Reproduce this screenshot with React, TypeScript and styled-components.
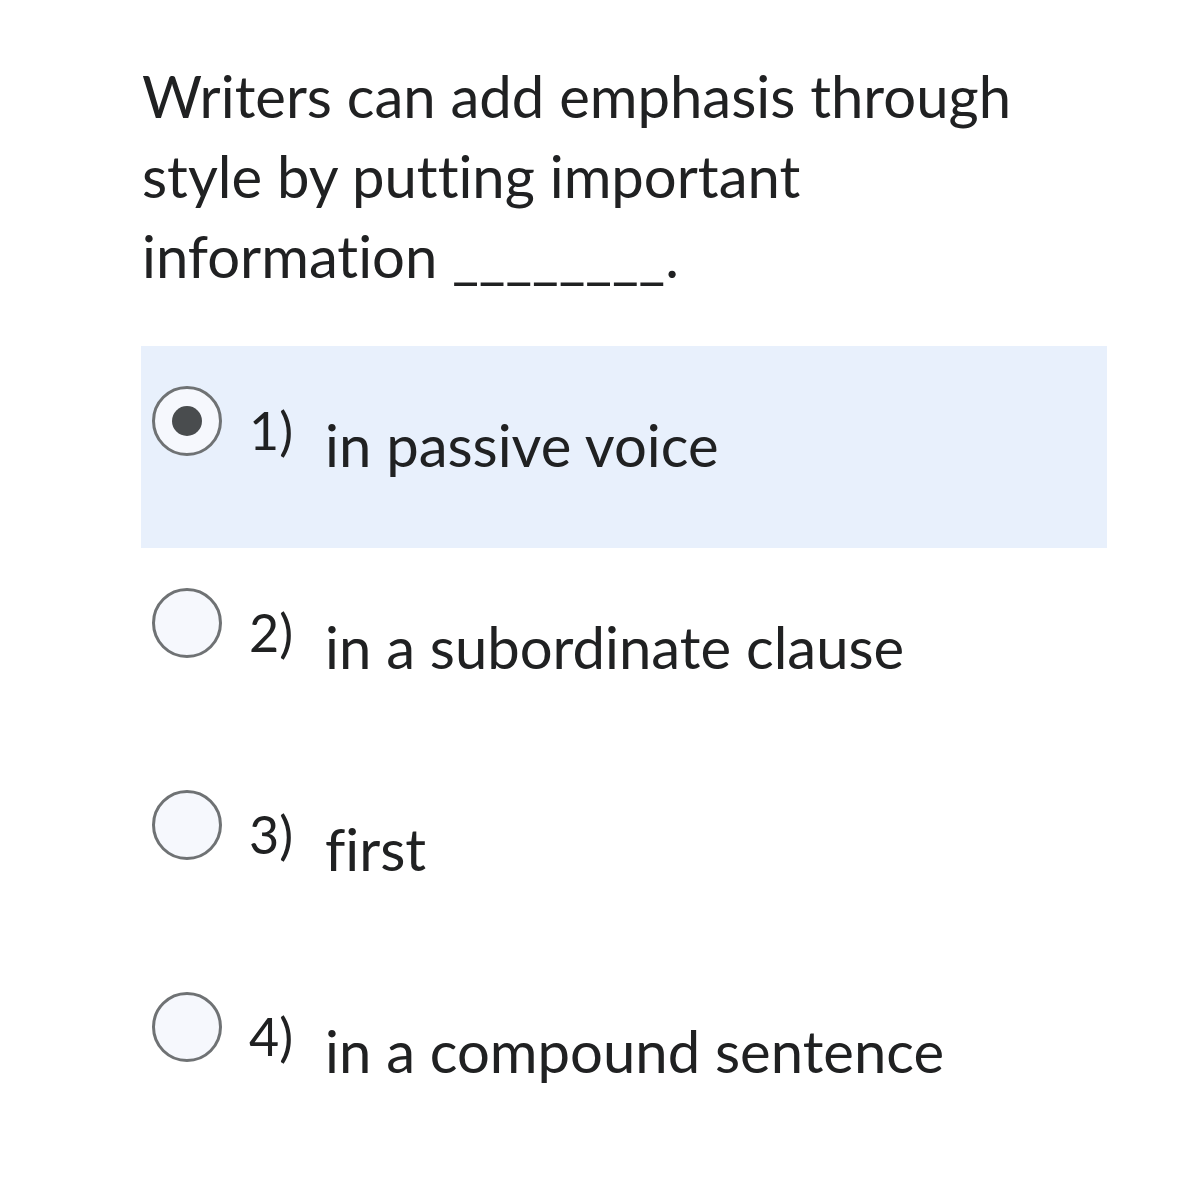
import React from "react";
import styled, { createGlobalStyle } from "styled-components";

const Global = createGlobalStyle`
  html, body { margin: 0; padding: 0; background: #ffffff; }
  body {
    font-family: Lato, "Open Sans", sans-serif;
    color: #202122;
    font-variant-ligatures: none;
    font-feature-settings: "liga" 0, "clig" 0;
  }
`;

const Page = styled.div`
  width: 1179px;
  height: 1179px;
  box-sizing: border-box;
  padding: 56px 72px 0 141px;
`;

const Question = styled.p`
  margin: 0 0 50px 1px;
  font-size: 58px;
  line-height: 80px;
  color: #202122;
  width: 900px;
`;

const Options = styled.div`
  display: flex;
  flex-direction: column;
`;

const Row = styled.label<{ $selected?: boolean }>`
  display: flex;
  align-items: flex-start;
  height: 202px;
  box-sizing: border-box;
  padding: 40px 0 0 11px;
  width: 966px;
  background: ${(p) => (p.$selected ? "#e8f0fc" : "transparent")};
`;

const Radio = styled.span<{ $checked?: boolean }>`
  flex: none;
  width: 70px;
  height: 70px;
  box-sizing: border-box;
  border-radius: 50%;
  border: 3px solid #6f7274;
  background: #f6f8fd;
  display: flex;
  align-items: center;
  justify-content: center;
  &::after {
    content: "";
    display: ${(p) => (p.$checked ? "block" : "none")};
    width: 30px;
    height: 30px;
    border-radius: 50%;
    background: #494c4e;
  }
`;

const Num = styled.span`
  margin-left: 27px;
  width: 76px;
  flex: none;
  font-size: 52px;
  line-height: 56px;
  margin-top: 16px;
  color: #202122;
`;

const Text = styled.span`
  font-size: 58px;
  line-height: 64px;
  margin-top: 27px;
  color: #202122;
`;

const options = [
  "in passive voice",
  "in a subordinate clause",
  "first",
  "in a compound sentence",
];

export default function App() {
  return (
    <>
      <Global />
      <Page>
        <Question>
          Writers can add emphasis through style by putting important information ________.
        </Question>
        <Options>
          {options.map((o, i) => (
            <Row key={o} $selected={i === 0}>
              <Radio $checked={i === 0} />
              <Num>{i + 1})</Num>
              <Text>{o}</Text>
            </Row>
          ))}
        </Options>
      </Page>
    </>
  );
}
